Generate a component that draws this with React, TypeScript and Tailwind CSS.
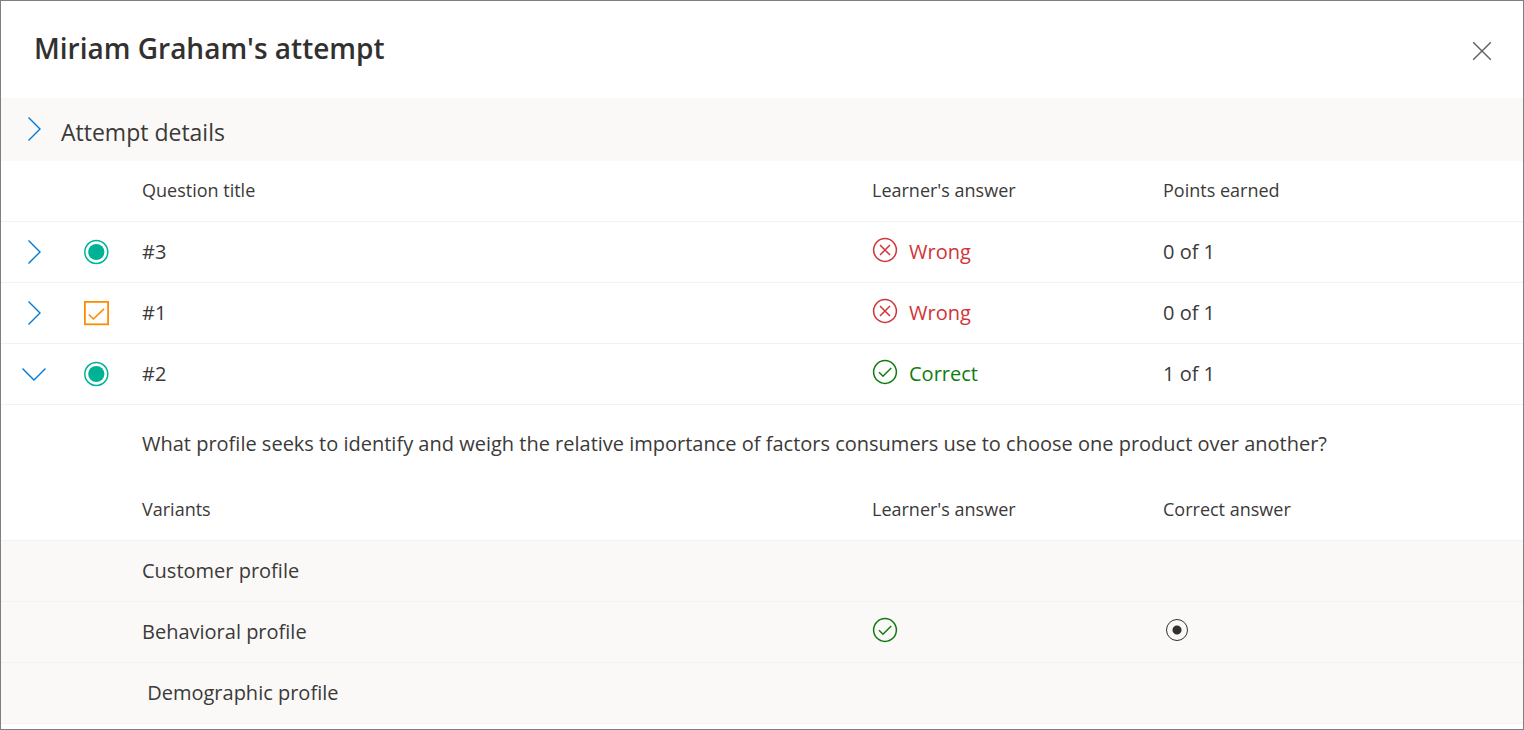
import { useState } from 'react';
import clsx from 'clsx';

type Question = {
  id: number;
  kind: 'single' | 'multiple';
  correct: boolean;
  points: string;
};

const questions: Question[] = [
  { id: 3, kind: 'single', correct: false, points: '0 of 1' },
  { id: 1, kind: 'multiple', correct: false, points: '0 of 1' },
  { id: 2, kind: 'single', correct: true, points: '1 of 1' },
];

const variants = [
  { name: 'Customer profile', chosen: false, correct: false },
  { name: 'Behavioral profile', chosen: true, correct: true },
  { name: '\u00a0Demographic profile', chosen: false, correct: false },
];

function Chevron({ open = false }: { open?: boolean }) {
  return (
    <svg width="26" height="26" viewBox="0 0 26 26" fill="none" stroke="#0078d4" strokeWidth="1.4" aria-hidden="true">
      <path d={open ? 'M1.5 7.5 13 19 24.5 7.5' : 'M7.5 1.5 19 13 7.5 24.5'} />
    </svg>
  );
}

function KindIcon({ kind }: { kind: Question['kind'] }) {
  if (kind === 'multiple') {
    return (
      <svg width="26" height="26" viewBox="0 0 26 26" fill="none" stroke="#ff8c00" aria-hidden="true">
        <rect x="1.9" y="1.9" width="23.2" height="22.4" strokeWidth="1.8" />
        <path d="M5.8 14.5 10.4 19 21 8.8" strokeWidth="1.6" />
      </svg>
    );
  }
  return (
    <svg width="26" height="26" viewBox="0 0 26 26" fill="none" aria-hidden="true">
      <circle cx="13.3" cy="13" r="11.5" stroke="#00b294" strokeWidth="1.5" />
      <circle cx="13.3" cy="13" r="8.1" fill="#00b294" />
    </svg>
  );
}

function ResultIcon({ correct }: { correct: boolean }) {
  return (
    <svg
      width="26"
      height="26"
      viewBox="0 0 26 26"
      fill="none"
      stroke={correct ? '#107c10' : '#d13438'}
      strokeWidth="1.5"
      aria-hidden="true"
      className="mb-1"
    >
      <circle cx="13" cy="13" r="11.4" />
      <path d={correct ? 'M7 13.3 11 17.2 19.2 9' : 'M8 8 18 18M18 8 8 18'} />
    </svg>
  );
}

function Columns() {
  return (
    <colgroup>
      <col className="w-[68px]" />
      <col className="w-[73px]" />
      <col />
      <col className="w-[291px]" />
      <col className="w-[360px]" />
    </colgroup>
  );
}

const tableClass = 'w-full table-fixed border-separate border-spacing-0 text-left';
const headCell = 'h-[61px] border-b border-[#f3f2f1] pb-[2px] text-lg font-normal';
const cell = 'h-[61px] border-b border-[#f3f2f1]';

export default function App() {
  const [openId, setOpenId] = useState<number | null>(2);

  return (
    <main className="flex min-h-screen flex-col border border-[#7f7f7f] bg-white font-['Open_Sans','Noto_Sans',sans-serif] text-xl text-[#3b3a39]">
      {/* Title */}
      <header className="flex h-[97px] items-center justify-between pr-7 pl-[33px]">
        <h1 className="pb-[2px] text-[28px] font-semibold text-[#323130]">Miriam Graham's attempt</h1>
        <button type="button" aria-label="Close" className="mt-[2px] cursor-pointer">
          <svg width="26" height="26" viewBox="0 0 26 26" fill="none" stroke="#605e5c" strokeWidth="1.4" aria-hidden="true">
            <path d="M4.2 4.2 21.8 21.8M21.8 4.2 4.2 21.8" />
          </svg>
        </button>
      </header>

      {/* Attempt details */}
      <button type="button" aria-expanded="false" className="flex h-[63px] cursor-pointer items-center gap-[14px] bg-[#faf9f8] pb-[2px] pl-5 text-left">
        <Chevron />
        <span className="pt-2 text-[23px]">Attempt details</span>
      </button>

      {/* Questions */}
      <table className={tableClass}>
        <Columns />
        <thead>
          <tr>
            <th className={headCell}></th>
            <th className={headCell}></th>
            <th className={headCell}>Question title</th>
            <th className={headCell}>Learner's answer</th>
            <th className={headCell}>Points earned</th>
          </tr>
        </thead>
        <tbody>
          {questions.map((q) => (
            <tr key={q.id}>
              <td className={clsx(cell, 'pl-5')}>
                <button
                  type="button"
                  aria-label={`Question ${q.id}`}
                  aria-expanded={openId === q.id}
                  onClick={() => setOpenId(openId === q.id ? null : q.id)}
                  className="block cursor-pointer"
                >
                  <Chevron open={openId === q.id} />
                </button>
              </td>
              <td className={clsx(cell, 'pl-[14px]')}>
                <KindIcon kind={q.kind} />
              </td>
              <td className={cell}>#{q.id}</td>
              <td className={cell}>
                <div className={clsx('flex items-center gap-[11px]', q.correct ? 'text-[#107c10]' : 'text-[#d13438]')}>
                  <ResultIcon correct={q.correct} />
                  {q.correct ? 'Correct' : 'Wrong'}
                </div>
              </td>
              <td className={cell}>{q.points}</td>
            </tr>
          ))}
        </tbody>
      </table>

      {/* Expanded question */}
      {openId === 2 && (
        <section>
          <p className="flex min-h-[75px] items-center pt-[2px] pr-8 pl-[141px]">
            What profile seeks to identify and weigh the relative importance of factors consumers use to choose one product over another?
          </p>
          <table className={tableClass}>
            <Columns />
            <thead>
              <tr>
                <th className={headCell}></th>
                <th className={headCell}></th>
                <th className={headCell}>Variants</th>
                <th className={headCell}>Learner's answer</th>
                <th className={headCell}>Correct answer</th>
              </tr>
            </thead>
            <tbody className="bg-[#faf9f8]">
              {variants.map((v) => (
                <tr key={v.name}>
                  <td className={cell}></td>
                  <td className={cell}></td>
                  <td className={cell}>{v.name}</td>
                  <td className={cell}>{v.chosen && <ResultIcon correct />}</td>
                  <td className={cell}>
                    {v.correct && (
                      <input
                        type="radio"
                        name="correct-answer"
                        aria-label={v.name}
                        checked
                        readOnly
                        className="mb-1 ml-[3px] block size-[22px] appearance-none rounded-full border border-[#323130] bg-[radial-gradient(circle,#323130_4px,transparent_5px)]"
                      />
                    )}
                  </td>
                </tr>
              ))}
            </tbody>
          </table>
        </section>
      )}
    </main>
  );
}
